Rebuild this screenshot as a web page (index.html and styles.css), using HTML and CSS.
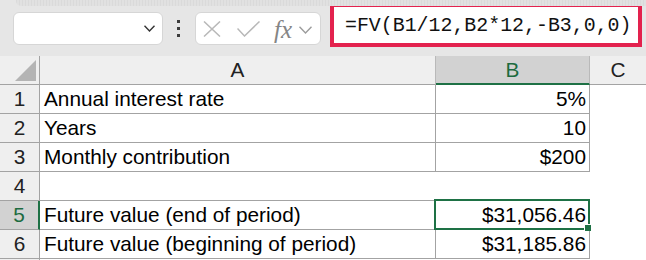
FILE: index.html
```html
<html>
    <head>
        <title>FV formula</title>
        <link rel="stylesheet" href="styles.css">
    </head>
    <body>
        <div class="toolbar">
            <div class="namebox">
                <svg class="chev" width="11" height="7" viewBox="0 0 11 7"><polyline points="0.5,0.8 5.5,6 10.5,0.8" fill="none" stroke="#333" stroke-width="1.4"/></svg>
            </div>
            <div class="dots"><span></span><span></span><span></span></div>
            <div class="fxbox">
                <svg class="cancel" width="18" height="16" viewBox="0 0 18 16"><path d="M1 0.5 L17 15.5 M17 0.5 L1 15.5" stroke="#b8b8b8" stroke-width="1.5" fill="none"/></svg>
                <svg class="enter" width="23" height="16" viewBox="0 0 23 16"><polyline points="0.5,7.5 7.5,15 22.5,0.5" fill="none" stroke="#b8b8b8" stroke-width="1.5"/></svg>
                <span class="fx">fx</span>
                <svg class="chev2" width="13" height="8" viewBox="0 0 13 8"><polyline points="0.5,0.8 6.5,7 12.5,0.8" fill="none" stroke="#9c9c9c" stroke-width="1.4"/></svg>
            </div>
            <div class="formula">=FV(B1/12,B2*12,-B3,0,0)</div>
        </div>
        <div class="sheet">
            <div class="hd corner"><svg width="39" height="28" viewBox="0 0 39 28"><polygon points="15,25 36,25 36,4" fill="#b4b4b4"/></svg></div>
            <div class="hd col">A</div>
            <div class="hd col sel">B</div>
            <div class="hd col last">C</div>

            <div class="hd row">1</div>
            <div class="cell box">Annual interest rate</div>
            <div class="cell box num">5%</div>
            <div class="cell"></div>

            <div class="hd row">2</div>
            <div class="cell box">Years</div>
            <div class="cell box num">10</div>
            <div class="cell"></div>

            <div class="hd row">3</div>
            <div class="cell box">Monthly contribution</div>
            <div class="cell box num">$200</div>
            <div class="cell"></div>

            <div class="hd row">4</div>
            <div class="cell under"></div>
            <div class="cell"></div>
            <div class="cell"></div>

            <div class="hd row sel">5</div>
            <div class="cell box">Future value (end of period)</div>
            <div class="cell box num active">$31,056.46<span class="selection"><span class="handle"></span></span></div>
            <div class="cell"></div>

            <div class="hd row">6</div>
            <div class="cell box">Future value (beginning of period)</div>
            <div class="cell box num">$31,185.86</div>
            <div class="cell"></div>

            <div class="hd row"></div>
            <div class="cell"></div>
            <div class="cell"></div>
            <div class="cell"></div>
        </div>
    </body>
</html>
```

FILE: styles.css
```css
body {
    margin: 0;
    font-family: "Liberation Sans", Arial, sans-serif;
    background: #fff;
    overflow: hidden;
}
.toolbar {
    position: relative;
    display: flex;
    align-items: flex-start;
    height: 56px;
    background: #e6e6e6;
}
/* faded ribbon edge at the very top */
.toolbar::before {
    content: "";
    position: absolute;
    top: 0;
    left: 16px;
    right: 0;
    height: 6px;
    background: repeating-linear-gradient(90deg, #dadada 0 1px, #e1e1e1 1px 3px);
    border-bottom-left-radius: 5px;
}
.namebox {
    box-sizing: border-box;
    margin: 12px 0 0 13px;
    width: 150px;
    height: 33px;
    background: #fff;
    border: 1px solid #d6d6d6;
    border-radius: 6px;
    display: flex;
    align-items: center;
    justify-content: flex-end;
    padding-right: 7px;
}
.dots {
    margin: 20px 0 0 14px;
    display: flex;
    flex-direction: column;
    gap: 4px;
}
.dots span {
    width: 3px;
    height: 3px;
    background: #3c3c3c;
}
.fxbox {
    box-sizing: border-box;
    margin: 12px 0 0 15px;
    width: 126px;
    height: 33px;
    background: #fff;
    border: 1px solid #d6d6d6;
    border-radius: 6px;
    display: flex;
    align-items: center;
    padding-left: 7px;
}
.cancel {
    margin-top: 1px;
}
.enter {
    margin-left: 16px;
}
.fx {
    margin-left: 14px;
    font-family: "Liberation Serif", serif;
    font-style: italic;
    font-size: 25px;
    color: #858585;
    line-height: 28px;
    margin-top: 2px;
}
.chev2 {
    margin-left: 7px;
    margin-top: 2px;
}
.formula {
    box-sizing: border-box;
    margin: 3px 0 0 9px;
    width: 312px;
    height: 44px;
    border: 4px solid #e3224e;
    background: #fff;
    font-family: "Liberation Mono", "DejaVu Sans Mono", monospace;
    font-size: 19.9px;
    line-height: 37px;
    padding-left: 11px;
    color: #111;
    white-space: nowrap;
}
.sheet {
    display: grid;
    grid-template-columns: 40px 396px 154px 1fr;
    grid-auto-rows: 29px;
    font-size: 20.8px;
}
.sheet > div {
    box-sizing: border-box;
    line-height: 28px;
    white-space: nowrap;
}
.hd {
    background: #efefef;
    color: #222;
    text-align: center;
    border-bottom: 1px solid #a3a3a3;
}
.corner, .row {
    border-right: 1px solid #a3a3a3;
}
.col {
    border-right: 1px solid #b9b9b9;
}
.col.last {
    border-right: 0;
}
.hd.sel {
    background: #d2d2d2;
    color: #1d6b40;
}
.col.sel {
    border-bottom: 2px solid #1e7145;
}
.row.sel {
    border-right: 2px solid #1e7145;
}
.cell {
    padding: 0 4px;
    color: #000;
}
.box {
    border-right: 1px solid #a3a3a3;
    border-bottom: 1px solid #a3a3a3;
}
.under {
    border-bottom: 1px solid #a3a3a3;
}
.num {
    text-align: right;
    padding-right: 3px;
}
.active {
    position: relative;
    overflow: visible;
}
.selection {
    position: absolute;
    top: -2px;
    left: -2px;
    right: -1px;
    bottom: -1px;
    border: 2px solid #1e7145;
}
.handle {
    position: absolute;
    right: -3px;
    bottom: -3px;
    width: 6px;
    height: 6px;
    background: #1e7145;
    border-left: 1px solid #fff;
    border-top: 1px solid #fff;
}
```
